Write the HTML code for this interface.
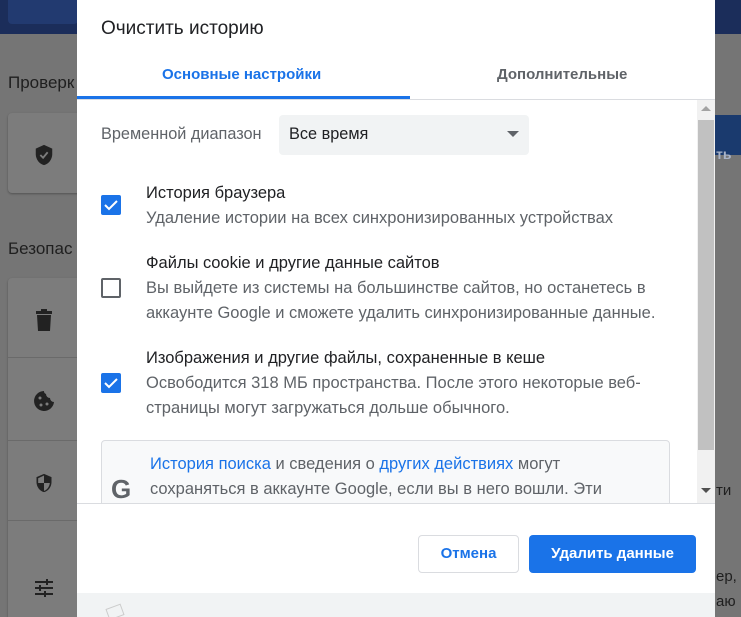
<!DOCTYPE html>
<html><head><meta charset="utf-8"><style>
*{margin:0;padding:0;box-sizing:border-box}
html,body{width:741px;height:617px;overflow:hidden}
body{position:relative;background:#757575;font-family:"Liberation Sans",Arial,sans-serif;color:#202124}
.hdr{position:absolute;left:0;top:0;width:741px;height:34px;background:#1b2d5a}
.bg{position:absolute;color:#1f1f1f;font-size:17px}
.card{position:absolute;background:#7c7c7c;border-radius:4px;box-shadow:0 1px 2px rgba(0,0,0,.3)}
.dlg{position:absolute;left:77px;top:0;width:638px;height:617px;background:#fff;overflow:hidden}
.t{position:absolute;left:24px;top:18px;font-size:19px;color:#202124}
.tab{position:absolute;top:66px;font-size:15px;font-weight:bold}
.cb{position:absolute;left:24px;width:20px;height:20px;border-radius:2px}
.on{background:#1a73e8}
.off{border:2px solid #5f6368}
.lbl{position:absolute;left:69px;font-size:16.5px;color:#202124;line-height:25px;white-space:nowrap}
.sub{color:#5f6368}
a{color:#1a73e8;text-decoration:none}
.btn{position:absolute;top:535px;height:38px;border-radius:4px;font-size:15px;font-weight:bold;text-align:center;line-height:36px}
</style></head><body>
<div class="hdr"><div style="position:absolute;left:8px;top:0;width:70px;height:24px;background:#223a70;border-radius:0 0 4px 4px"></div></div>
<div class="bg" style="left:8px;top:73px">Проверк</div>
<div class="card" style="left:8px;top:113px;width:100px;height:80px"></div>
<svg style="position:absolute;left:33px;top:144px" width="22" height="22" viewBox="0 0 24 24"><path d="M12 1L3 5v6c0 5.5 3.8 10.7 9 12 5.2-1.3 9-6.5 9-12V5z" fill="#222"/><path d="M8 12l3 3 5-6" stroke="#7c7c7c" stroke-width="2" fill="none"/></svg>
<div class="bg" style="left:8px;top:239px">Безопас</div>
<div class="card" style="left:8px;top:278px;width:100px;height:339px;border-radius:4px 4px 0 0"></div>
<div style="position:absolute;left:8px;top:357px;width:70px;height:1px;background:#6a6a6a"></div>
<div style="position:absolute;left:8px;top:440px;width:70px;height:1px;background:#6a6a6a"></div>
<div style="position:absolute;left:8px;top:520px;width:70px;height:1px;background:#6a6a6a"></div>
<svg style="position:absolute;left:35px;top:309px" width="18" height="22" viewBox="0 0 18 22"><rect x="1" y="2" width="16" height="3" fill="#222"/><rect x="6" y="0" width="6" height="3" fill="#222"/><path d="M2 6h14l-1 16H3z" fill="#222"/></svg>
<svg style="position:absolute;left:33px;top:390px" width="22" height="22" viewBox="0 0 22 22"><path d="M11 1a10 10 0 1 0 10 11 4 4 0 0 1-4-4 4 4 0 0 1-4-4 3 3 0 0 1-2-3z" fill="#222"/><circle cx="7" cy="8" r="1.5" fill="#7c7c7c"/><circle cx="8" cy="15" r="1.5" fill="#7c7c7c"/><circle cx="14" cy="14" r="1.5" fill="#7c7c7c"/></svg>
<svg style="position:absolute;left:34px;top:472px" width="20" height="22" viewBox="0 0 24 24"><path d="M12 1L3 5v6c0 5.5 3.8 10.7 9 12 5.2-1.3 9-6.5 9-12V5z" fill="#222"/><path d="M12 3v9H5V6.3zM12 12h7c-.5 4.5-3.3 8.3-7 9.5z" fill="#7c7c7c"/></svg>
<svg style="position:absolute;left:35px;top:579px" width="18" height="18" viewBox="0 0 18 18" stroke="#222" stroke-width="2"><path d="M0 3h18M0 9h18M0 15h18"/><path d="M12 0v6M5 6v6M10 12v6" /></svg>
<div class="bg" style="left:716px;top:568px;font-size:15px">ер,</div>
<div class="bg" style="left:716px;top:593px;font-size:15px">аю</div>
<div class="bg" style="left:716px;top:482px;font-size:15px">ти</div>
<div style="position:absolute;left:715px;top:115px;width:26px;height:40px;background:#1a3a6e"></div>
<div class="bg" style="left:716px;top:146px;font-size:14px;color:#aab4c8;font-weight:bold">ть</div>

<div class="dlg">
<div class="t">Очистить историю</div>
<div class="tab" style="left:85px;color:#1a73e8">Основные настройки</div>
<div class="tab" style="left:420px;color:#5f6368">Дополнительные</div>
<div style="position:absolute;left:0;top:96px;width:333px;height:3px;background:#1a73e8"></div>
<div style="position:absolute;left:0;top:99px;width:638px;height:1px;background:#dadce0"></div>
<div style="position:absolute;left:24px;top:125px;font-size:16.3px;color:#5f6368">Временной диапазон</div>
<div style="position:absolute;left:202px;top:115px;width:250px;height:40px;background:#f1f3f4;border-radius:4px;font-size:16.3px;padding:10px 0 0 10px">Все время</div>
<div style="position:absolute;left:430px;top:131px;border:6px solid transparent;border-top:6px solid #5f6368"></div>

<div class="cb on" style="top:195px"><svg width="20" height="20"><path d="M4 10l4 4 8-8" stroke="#fff" stroke-width="2" fill="none"/></svg></div>
<div class="lbl" style="top:181px">История браузера<br><span class="sub">Удаление истории на всех синхронизированных устройствах</span></div>
<div class="cb off" style="top:278px"></div>
<div class="lbl" style="top:251px">Файлы cookie и другие данные сайтов<br><span class="sub">Вы выйдете из системы на большинстве сайтов, но останетесь в<br>аккаунте Google и сможете удалить синхронизированные данные.</span></div>
<div class="cb on" style="top:373px"><svg width="20" height="20"><path d="M4 10l4 4 8-8" stroke="#fff" stroke-width="2" fill="none"/></svg></div>
<div class="lbl" style="top:346px">Изображения и другие файлы, сохраненные в кеше<br><span class="sub">Освободится 318 МБ пространства. После этого некоторые веб-<br>страницы могут загружаться дольше обычного.</span></div>

<div style="position:absolute;left:24px;top:440px;width:569px;height:70px;border:1px solid #dadce0;border-radius:4px;background:#f8f9fa"></div>
<div style="position:absolute;left:34px;top:474px;font-size:26px;font-weight:bold;color:#5f6368">G</div>
<div class="lbl" style="left:73px;top:452px;color:#5f6368"><a>История поиска</a> и сведения о <a>других действиях</a> могут<br>сохраняться в аккаунте Google, если вы в него вошли. Эти</div>

<div style="position:absolute;left:620px;top:100px;width:18px;height:403px;background:#f1f1f1"></div>
<div style="position:absolute;left:621px;top:120px;width:16px;height:330px;background:#c1c1c1"></div>
<div style="position:absolute;left:624px;top:106px;border:5px solid transparent;border-bottom:5px solid #a3a3a3;border-top:0"></div>
<div style="position:absolute;left:624px;top:488px;border:5px solid transparent;border-top:5px solid #505050;border-bottom:0"></div>

<div style="position:absolute;left:0;top:503px;width:638px;height:90px;background:#fff;border-top:1px solid #dadce0"></div>
<div class="btn" style="left:341px;width:101px;border:1px solid #dadce0;color:#1a73e8;background:#fff">Отмена</div>
<div class="btn" style="left:452px;width:167px;background:#1a73e8;color:#fff;line-height:38px">Удалить данные</div>
<div style="position:absolute;left:0;top:593px;width:638px;height:24px;background:#f1f3f4"></div>
<div style="position:absolute;left:30px;top:606px;width:16px;height:12px;border:1px solid #ccc;transform:rotate(-20deg)"></div>
</div>
</body></html>
